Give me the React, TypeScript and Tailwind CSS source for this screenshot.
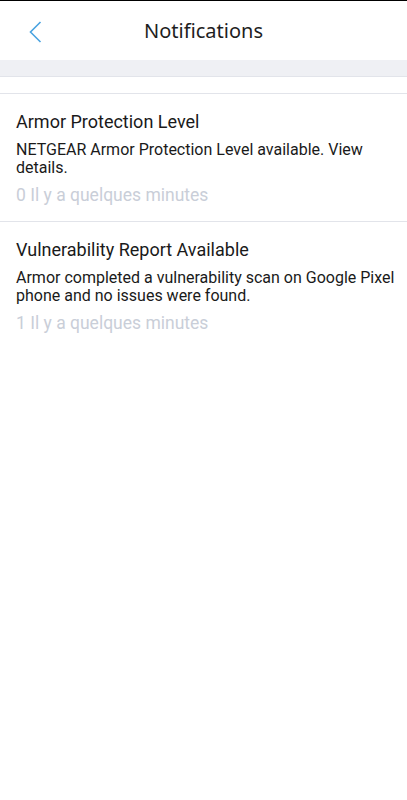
import React from "react";

const items = [
  {
    title: "Armor Protection Level",
    body: "NETGEAR Armor Protection Level available. View details.",
    time: "0 Il y a quelques minutes",
  },
  {
    title: "Vulnerability Report Available",
    body: "Armor completed a vulnerability scan on Google Pixel phone and no issues were found.",
    time: "1 Il y a quelques minutes",
  },
];

export default function App() {
  return (
    <div className="w-[407px] h-[800px] bg-white flex flex-col" style={{ fontFamily: "Roboto, 'Noto Sans', sans-serif" }}>
      <div className="h-px bg-black" />
      <div className="h-[59px] relative flex items-center justify-center">
        <svg className="absolute left-[29px] top-[20px]" width="13" height="22" viewBox="0 0 13 22" fill="none">
          <path d="M11.5 1 L1.5 11 L11.5 21" stroke="#4aa3e0" strokeWidth="1.6" />
        </svg>
        <span className="text-[20px] text-[#1e1e1e]" style={{ fontFamily: "'Noto Sans', sans-serif" }}>Notifications</span>
      </div>
      <div className="h-[17px] bg-[#eff0f4] border-b border-[#e2e4ea]" />
      <div className="h-[17px] border-b border-[#e2e4ea]" />
      {items.map((it, i) => (
        <div key={i} className="pl-4 pr-[10px] pt-[17px] pb-[16px] border-b border-[#e2e4ea] last:border-b-0 text-[#1a1a1a]">
          <div className="text-[18px] leading-[22px]">{it.title}</div>
          <div className="text-[16px] leading-[18px] mt-[8px]">{it.body}</div>
          <div className="text-[17.5px] leading-[20px] mt-[8px] text-[#c9ced8]">{it.time}</div>
        </div>
      ))}
    </div>
  );
}
